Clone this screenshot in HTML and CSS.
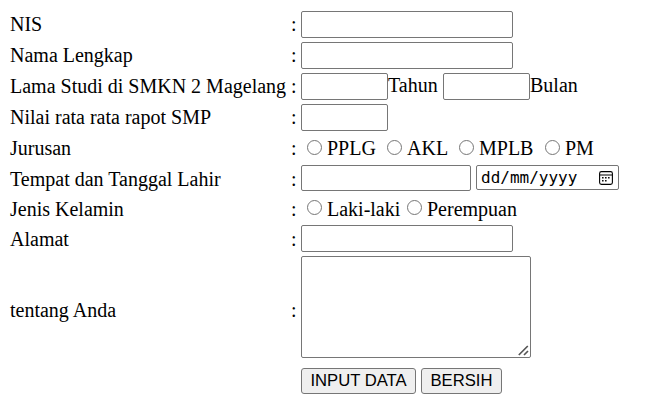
FILE: index.html
```html
<!DOCTYPE html>
<html lang="id">
<head>
<meta charset="utf-8">
<title>Form Data</title>
<link rel="stylesheet" href="styles.css">
</head>
<body>
<form class="form">
  <label>NIS</label><span>:</span>
  <div class="field"><input class="text" type="text"></div>

  <label>Nama Lengkap</label><span>:</span>
  <div class="field"><input class="text" type="text"></div>

  <label>Lama Studi di SMKN 2 Magelang</label><span>:</span>
  <div class="field"><input class="text small" type="text"><span class="unit year">Tahun</span><input class="text small" type="text"><span class="unit">Bulan</span></div>

  <label>Nilai rata rata rapot SMP</label><span>:</span>
  <div class="field"><input class="text small" type="text"></div>

  <label>Jurusan</label><span>:</span>
  <div class="field majors">
    <label class="option pplg"><input type="radio" name="jurusan">PPLG</label>
    <label class="option akl"><input type="radio" name="jurusan">AKL</label>
    <label class="option mplb"><input type="radio" name="jurusan">MPLB</label>
    <label class="option"><input type="radio" name="jurusan">PM</label>
  </div>

  <label class="lower">Tempat dan Tanggal Lahir</label><span class="lower">:</span>
  <div class="field birth">
    <input class="text place" type="text">
    <div class="date"><span>dd/mm/yyyy</span>
      <svg width="14" height="14" viewBox="0 0 14 14"><rect x=".6" y=".6" width="12.8" height="12.8" rx="1.8" fill="none" stroke="#000" stroke-width="1.1"/><path d="M1 4h12" stroke="#000"/><path d="M6 6h1.6v1.6H6zM9 6h1.6v1.6H9zM3 6h1.6v1.6H3zM3 9h1.6v1.6H3zM6 9h1.6v1.6H6z" fill="#111"/></svg>
    </div>
  </div>

  <label class="lower">Jenis Kelamin</label><span class="lower">:</span>
  <div class="field gender">
    <label class="option laki"><input type="radio" name="kelamin">Laki-laki</label>
    <label class="option"><input type="radio" name="kelamin">Perempuan</label>
  </div>

  <label class="address-label">Alamat</label><span class="address-label">:</span>
  <div class="field"><input class="text" type="text"></div>

  <label class="about-label">tentang Anda</label><span class="about-label">:</span>
  <div class="field about"><textarea></textarea>
    <svg class="grip" width="11" height="11" viewBox="0 0 11 11"><path d="M.8 10L9.8 1M6 10l4-4" stroke="#555" stroke-width="1.7"/></svg>
  </div>

  <div class="actions">
    <button class="submit" type="button">INPUT DATA</button>
    <button class="reset" type="reset">BERSIH</button>
  </div>
</form>
</body>
</html>
```
FILE: styles.css
```css
* { box-sizing: border-box; }
body {
  margin: 0;
  background: #fff;
  color: #000;
  font: 20px/23px "Liberation Serif", serif;
}
.form {
  display: grid;
  grid-template-columns: 281px 10px 1fr;
  grid-template-rows: 27px 27px 27px 27px 26px 26px 26px 27px 102px 32px;
  row-gap: 4px;
  align-items: center;
  padding: 11px 0 0 10px;
  white-space: nowrap;
}
.lower { padding-top: 2px; }
.address-label { padding-top: 1px; }
.about-label { padding-top: 6px; }
.field { display: flex; align-items: center; height: 100%; }
input, textarea, button { margin: 0; }
.text {
  width: 212px;
  height: 100%;
  border: 1px solid #767676;
  border-radius: 2px;
  background: #fff;
}
.small { width: 87px; }
.unit { padding-bottom: 3px; }
.year { width: 55px; }
.option { display: flex; align-items: center; padding: 1px 0 0 6px; }
.gender .option { padding-top: 2px; }
.option input {
  appearance: none;
  width: 15px;
  height: 15px;
  margin: 0 5px 3px 0;
  border: 1px solid #767676;
  border-radius: 50%;
}
.pplg { width: 80px; }
.akl { width: 72px; }
.mplb { width: 86px; }
.laki { width: 100px; }
.birth { align-items: flex-start; gap: 5px; }
.place { width: 170px; }
.date {
  display: flex;
  align-items: center;
  justify-content: space-between;
  width: 143px;
  height: 25px;
  padding: 0 5px 0 4px;
  border: 1px solid #767676;
  border-radius: 2px;
  font: 16px/20px "DejaVu Sans Mono", monospace;
}
.about { position: relative; }
textarea {
  width: 230px;
  height: 102px;
  resize: none;
  border: 1px solid #767676;
  border-radius: 2px;
}
.grip { position: absolute; left: 217px; bottom: 2px; }
.actions { grid-column: 3; align-self: end; display: flex; gap: 5px; }
button {
  height: 26px;
  padding: 0;
  border: 1px solid #767676;
  border-radius: 3px;
  background: #efefef;
  color: #000;
  font: 16.67px/22px "Liberation Sans", sans-serif;
}
.submit { width: 115px; }
.reset { width: 81px; }
```
